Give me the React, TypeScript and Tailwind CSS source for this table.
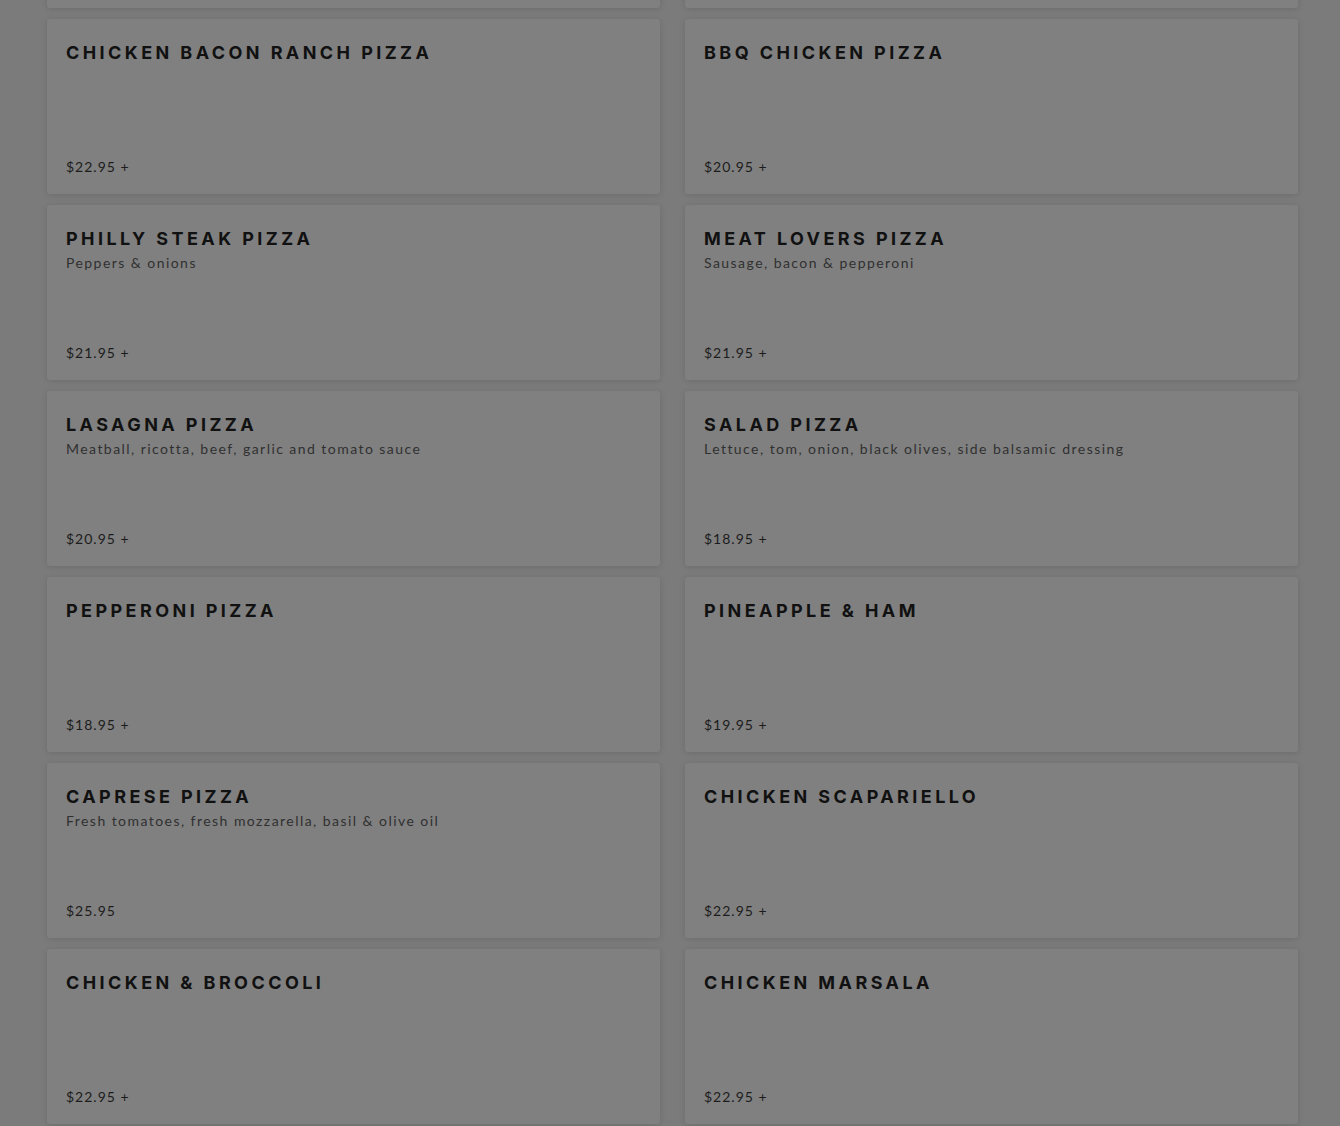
import React from 'react';

interface MenuItem {
    name: string;
    desc?: string;
    price: string;
}

const items: MenuItem[] = [
    { name: 'Chicken Bacon Ranch Pizza', price: '$22.95 +' },
    { name: 'BBQ Chicken Pizza', price: '$20.95 +' },
    { name: 'Philly Steak Pizza', desc: 'Peppers & onions', price: '$21.95 +' },
    { name: 'Meat Lovers Pizza', desc: 'Sausage, bacon & pepperoni', price: '$21.95 +' },
    { name: 'Lasagna Pizza', desc: 'Meatball, ricotta, beef, garlic and tomato sauce', price: '$20.95 +' },
    { name: 'Salad Pizza', desc: 'Lettuce, tom, onion, black olives, side balsamic dressing', price: '$18.95 +' },
    { name: 'Pepperoni Pizza', price: '$18.95 +' },
    { name: 'Pineapple & Ham', price: '$19.95 +' },
    { name: 'Caprese Pizza', desc: 'Fresh tomatoes, fresh mozzarella, basil & olive oil', price: '$25.95' },
    { name: 'Chicken Scapariello', price: '$22.95 +' },
    { name: 'Chicken & Broccoli', price: '$22.95 +' },
    { name: 'Chicken Marsala', price: '$22.95 +' },
];

const Card: React.FC<{ item?: MenuItem; className?: string }> = ({ item, className = '' }) => (
    <div
        className={`bg-[#808080] rounded-[3px] shadow-[0_1px_6px_rgba(0,0,0,0.12)] flex flex-col justify-between px-[19px] pt-[23px] pb-[17px] ${className}`}
    >
        {item && (
            <>
                <div>
                    <h3 className="font-['Inter',sans-serif] font-bold uppercase text-[18px] leading-[22px] tracking-[0.19em] text-[#111111]">
                        {item.name}
                    </h3>
                    {item.desc && (
                        <p className="font-['Lato',sans-serif] text-[14px] leading-[20px] tracking-[1.45px] text-[#303030] mt-[3px]">
                            {item.desc}
                        </p>
                    )}
                </div>
                <p className="font-['Lato',sans-serif] text-[14px] leading-[20px] tracking-[1px] text-[#1c1c1c]">
                    {item.price}
                </p>
            </>
        )}
    </div>
);

export default function App() {
    return (
        <div className="h-[1126px] overflow-hidden bg-[#7b7b7b]">
            <div className="grid grid-cols-[613px_613px] gap-x-[25px] gap-y-[11px] pl-[47px] -mt-[167px]">
                <Card className="h-[175px]" />
                <Card className="h-[175px]" />
                {items.map((item) => (
                    <Card key={item.name} item={item} className="h-[175px]" />
                ))}
            </div>
        </div>
    );
}
